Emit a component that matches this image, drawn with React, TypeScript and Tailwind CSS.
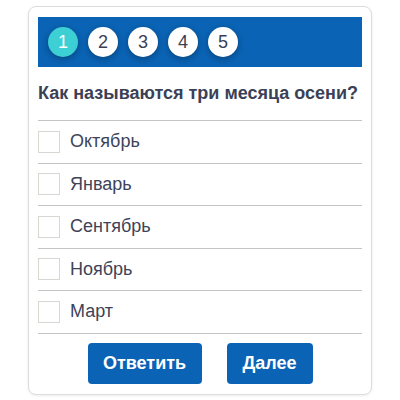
import React from 'react';

const steps = [1, 2, 3, 4, 5];
const options = ['Октябрь', 'Январь', 'Сентябрь', 'Ноябрь', 'Март'];

export default function App() {
  return (
    <div className="w-[400px] h-[400px] bg-white pt-[6px] pl-[28px]" style={{ fontFamily: '"Liberation Sans", Arial, sans-serif' }}>
      <div className="w-[344px] h-[389px] rounded-lg border border-[#dcdcdc] shadow-[0_1px_3px_rgba(0,0,0,0.08)] px-[9px] pt-[10px]">
        {/* Steps */}
        <div className="h-[50px] bg-[#0a63b4] flex items-center gap-[10px] pl-[10px]">
          {steps.map((n) => (
            <div
              key={n}
              className={
                n === 1
                  ? 'w-[30px] h-[30px] rounded-full bg-[#3ccfd3] text-white text-[18px] flex items-center justify-center shadow-[0_2px_6px_rgba(0,0,0,0.3)]'
                  : 'w-[30px] h-[30px] rounded-full bg-white text-[#3a3f55] text-[18px] flex items-center justify-center shadow-[0_2px_6px_rgba(0,0,0,0.3)]'
              }
            >
              {n}
            </div>
          ))}
        </div>

        {/* Question */}
        <div className="h-[54px] flex items-center border-b border-[#c4c4c4] text-[18px] font-bold text-[#3a4156] whitespace-nowrap">
          Как называются три месяца осени?
        </div>

        {/* Options */}
        {options.map((o) => (
          <label key={o} className="h-[42.5px] flex items-center gap-[10px] border-b border-[#c4c4c4] text-[18px] text-[#3d4358]">
            <span className="w-[22px] h-[22px] border border-[#d8d8d2] bg-white" />
            {o}
          </label>
        ))}

        {/* Buttons */}
        <div className="flex justify-center gap-[25px] pt-[9px]">
          <button className="w-[114px] h-[41px] rounded bg-[#0b63b5] text-white font-bold text-[18px]">Ответить</button>
          <button className="w-[86px] h-[41px] rounded bg-[#0b63b5] text-white font-bold text-[18px]">Далее</button>
        </div>
      </div>
    </div>
  );
}
